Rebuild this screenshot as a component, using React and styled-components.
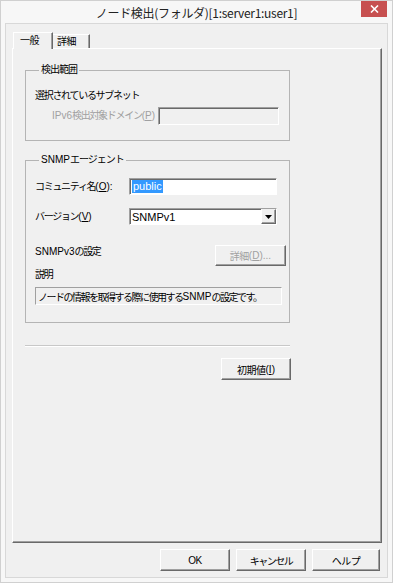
import React from 'react';
import styled, { createGlobalStyle } from 'styled-components';

const GlobalStyle = createGlobalStyle`
  html, body {
    margin: 0;
    padding: 0;
    background: #f7f7f7;
  }
  body {
    font-family: "Liberation Sans", "Noto Sans CJK JP", sans-serif;
    font-size: 10px;
    color: #000;
  }
  * {
    box-sizing: border-box;
  }
`;

const Window = styled.div`
  width: 393px;
  height: 583px;
  display: flex;
  flex-direction: column;
  background: #f7f7f7;
  border: 1px solid #d0d0d0;
`;

const TitleBar = styled.div`
  height: 22px;
  display: grid;
  grid-template-columns: 31px 1fr 31px;
  align-items: start;
`;

const Title = styled.div`
  grid-column: 2;
  text-align: center;
  font-family: "Noto Sans CJK JP", sans-serif;
  font-size: 12px;
  line-height: 24px;
  letter-spacing: -0.3px;
  color: #222;
`;

const CloseButton = styled.div`
  width: 26px;
  height: 16px;
  background: #c75050;
  display: flex;
  align-items: center;
  justify-content: center;
`;

const Client = styled.div`
  flex: 1;
  margin: 0 4px 4px;
  border: 1px solid #d8d8d8;
  background: #f0f0f0;
  padding: 8px 5px 6px 6px;
  display: flex;
  flex-direction: column;
`;

const TabStrip = styled.div`
  display: flex;
  align-items: flex-end;
  height: 17px;
  margin-bottom: -1px;
  padding-left: 1px;
`;

const Tab = styled.div`
  position: relative;
  z-index: ${p => (p.$active ? 1 : 0)};
  width: ${p => p.$w}px;
  height: ${p => (p.$active ? 17 : 14)}px;
  margin-bottom: ${p => (p.$active ? 0 : 1)}px;
  padding-left: ${p => (p.$active ? 6 : 4)}px;
  background: #f0f0f0;
  border-top: 1px solid #fff;
  border-left: ${p => (p.$active ? '1px solid #fff' : 'none')};
  border-right: 1px solid #696969;
  box-shadow: inset -1px 0 0 #a0a0a0;
  line-height: ${p => (p.$active ? 15 : 13)}px;
  letter-spacing: -0.5px;
`;

const Panel = styled.div`
  flex: 1;
  border: 1px solid;
  border-color: #fff #696969 #696969 #fff;
  box-shadow: inset -1px -1px 0 #a0a0a0;
  padding: 14px 0 0 12px;
  display: flex;
  flex-direction: column;
`;

const Group = styled.fieldset`
  width: 265px;
  min-width: 0;
  margin: ${p => p.$mt || 0}px 0 0;
  padding: 0 0 ${p => p.$pb}px 9px;
  border: 1px solid #b4b4b4;
  display: flex;
  flex-direction: column;
`;

const Legend = styled.legend`
  margin-left: 4px;
  padding: 0 2px;
  line-height: 14px;
  letter-spacing: -1px;
`;

const Latin = styled.span`
  letter-spacing: 0;
`;

const Row = styled.div`
  display: flex;
  align-items: ${p => p.$align || 'center'};
  height: ${p => p.$h}px;
  margin-top: ${p => p.$mt}px;
  padding-right: ${p => p.$pr || 0}px;
`;

const Label = styled.span`
  width: ${p => (p.$w ? `${p.$w}px` : 'auto')};
  flex-shrink: 0;
  margin-left: ${p => p.$ml || 0}px;
  line-height: 14px;
  letter-spacing: -1.3px;
  color: ${p => (p.$disabled ? '#a0a0a0' : '#000')};
  white-space: nowrap;
`;

const Field = styled.div`
  width: ${p => p.$w}px;
  height: 100%;
  margin-left: ${p => (p.$auto ? 'auto' : '0')};
  background: ${p => (p.$disabled ? '#f0f0f0' : '#fff')};
  border: 1px solid;
  border-color: #a0a0a0 #fff #fff #a0a0a0;
  box-shadow: inset 1px 1px 0 #696969;
  display: flex;
  align-items: center;
  padding-left: 2px;
  font-size: 11px;
`;

const Selected = styled.span`
  background: #3399ff;
  color: #fff;
  line-height: 13px;
  padding: 0 1px;
`;

const SelectText = styled.span`
  flex: 1;
  font-size: 11px;
`;

const DropButton = styled.div`
  width: 15px;
  height: 15px;
  background: #f0f0f0;
  border: 1px solid;
  border-color: #f0f0f0 #696969 #696969 #fff;
  box-shadow: inset -1px -1px 0 #a0a0a0;
  display: flex;
  align-items: center;
  justify-content: center;
`;

const Button = styled.div`
  width: ${p => p.$w}px;
  height: ${p => p.$h || 22}px;
  margin-left: ${p => (p.$auto ? 'auto' : '0')};
  flex-shrink: 0;
  background: #f0f0f0;
  border: 1px solid;
  border-color: #fff #696969 #696969 #fff;
  box-shadow: inset -1px -1px 0 #a0a0a0;
  display: flex;
  align-items: center;
  justify-content: center;
  letter-spacing: ${p => (p.$tight ? -1.5 : -0.5)}px;
  color: ${p => (p.$disabled ? '#a0a0a0' : '#000')};
`;

const Description = styled.div`
  width: 247px;
  height: 18px;
  margin-top: 5px;
  border: 1px solid;
  border-color: #a0a0a0 #fff #fff #a0a0a0;
  padding-left: 2px;
  display: flex;
  align-items: center;
  letter-spacing: -1.5px;
  white-space: nowrap;
`;

const Separator = styled.div`
  width: 265px;
  margin-top: 22px;
  border-top: 1px solid #c8c8c8;
  border-bottom: 1px solid #fff;
`;

const InitRow = styled.div`
  width: 266px;
  margin-top: 11px;
  display: flex;
`;

const ButtonRow = styled.div`
  display: flex;
  justify-content: flex-end;
  gap: 6px;
  margin-top: 6px;
  padding-right: 2px;
`;

// access key shown as "(X)" with the letter underlined
const Key = ({ k, tail = '' }) => (
  <Latin>
    (<u>{k}</u>){tail}
  </Latin>
);

export default function App() {
  return (
    <>
      <GlobalStyle />
      <Window>
        <TitleBar>
          <Title>ノード検出(フォルダ)[1:server1:user1]</Title>
          <CloseButton>
            <svg width="9" height="8" viewBox="0 0 9 8">
              <path d="M1 0.5 L8 7.5 M8 0.5 L1 7.5" stroke="#fff" strokeWidth="1.6" />
            </svg>
          </CloseButton>
        </TitleBar>
        <Client>
          <TabStrip>
            <Tab $active $w={40}>一般</Tab>
            <Tab $w={37}>詳細</Tab>
          </TabStrip>
          <Panel>
            <Group $pb={15}>
              <Legend>検出範囲</Legend>
              <Row $h={14} $mt={12}>
                <Label>選択されているサブネット</Label>
              </Row>
              <Row $h={18} $mt={4} $pr={10}>
                <Label $ml={17} $disabled>
                  <Latin>IPv6</Latin>検出対象ドメイン<Key k="P" />
                </Label>
                <Field $w={121} $auto $disabled />
              </Row>
            </Group>

            <Group $mt={12} $pb={17}>
              <Legend>
                <Latin>SNMP</Latin>エージェント
              </Legend>
              <Row $h={17} $mt={11}>
                <Label $w={94}>
                  コミュニティ名<Key k="O" tail=":" />
                </Label>
                <Field $w={148}>
                  <Selected>public</Selected>
                </Field>
              </Row>
              <Row $h={17} $mt={13}>
                <Label $w={94}>
                  バージョン<Key k="V" />
                </Label>
                <Field $w={148}>
                  <SelectText>SNMPv1</SelectText>
                  <DropButton>
                    <svg width="7" height="4" viewBox="0 0 7 4">
                      <path d="M0 0 H7 L3.5 4 Z" fill="#000" />
                    </svg>
                  </DropButton>
                </Field>
              </Row>
              <Row $h={21} $mt={20} $pr={3} $align="flex-start">
                <Label>
                  <Latin>SNMPv3</Latin>の設定
                </Label>
                <Button $w={71} $h={21} $auto $disabled>
                  詳細<Key k="D" tail="..." />
                </Button>
              </Row>
              <Row $h={14} $mt={2}>
                <Label>説明</Label>
              </Row>
              <Description>
                ノードの情報を取得する際に使用する<Latin>SNMP</Latin>の設定です。
              </Description>
            </Group>

            <Separator />
            <InitRow>
              <Button $w={70} $auto>
                初期値<Key k="I" />
              </Button>
            </InitRow>
          </Panel>
          <ButtonRow>
            <Button $w={70}>OK</Button>
            <Button $w={70} $tight>
              キャンセル
            </Button>
            <Button $w={68}>ヘルプ</Button>
          </ButtonRow>
        </Client>
      </Window>
    </>
  );
}
